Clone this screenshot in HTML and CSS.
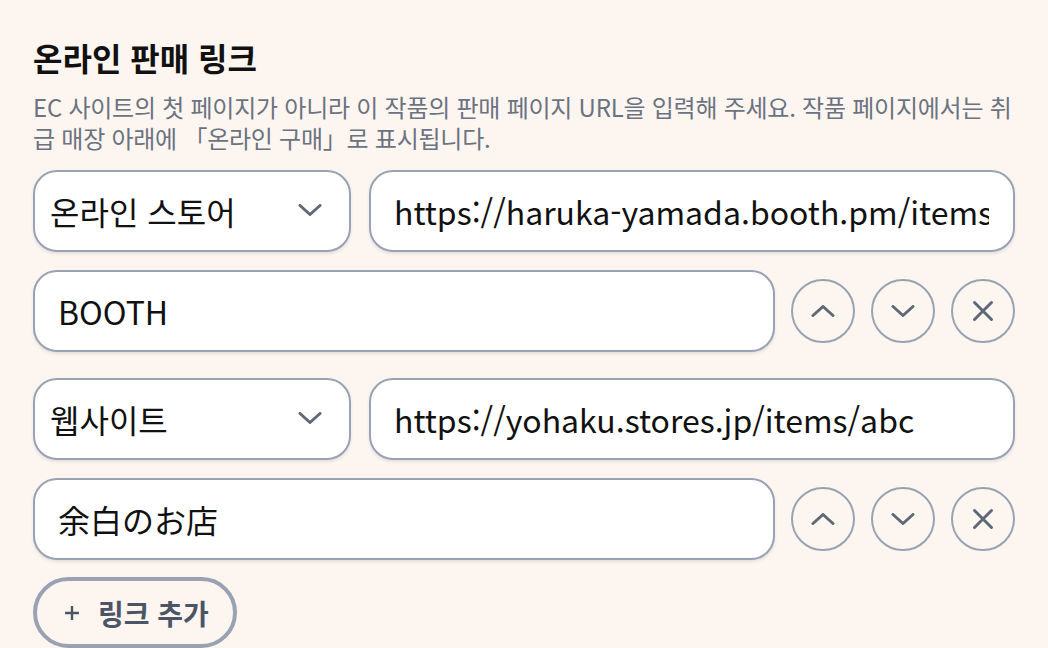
FILE: index.html
```html
<!DOCTYPE html>
<html lang="ko">
<head>
<meta charset="utf-8">
<title>온라인 판매 링크</title>
<link rel="stylesheet" href="styles.css">
</head>
<body>
<section class="panel">
  <h2 class="title">온라인 판매 링크</h2>
  <p class="desc">EC 사이트의 첫 페이지가 아니라 이 작품의 판매 페이지 URL을 입력해 주세요. 작품 페이지에서는 취급 매장 아래에 「온라인 구매」로 표시됩니다.</p>

  <div class="links">
    <div class="link-group">
      <div class="row row-top">
        <div class="select-wrap">
          <select class="field select">
            <option selected>온라인 스토어</option>
            <option>웹사이트</option>
          </select>
          <svg class="select-caret" width="24" height="12" viewBox="0 0 24 12" aria-hidden="true"><path d="M2 1.5 L12 10.5 L22 1.5" fill="none" stroke="#5f6878" stroke-width="3" stroke-linecap="round" stroke-linejoin="round"/></svg>
        </div>
        <input class="field url" type="text" value="https://haruka-yamada.booth.pm/items/4821937">
      </div>
      <div class="row row-bottom">
        <input class="field name" type="text" value="BOOTH">
        <button class="circle" aria-label="위로"><svg width="24" height="12" viewBox="0 0 24 12"><path d="M2 10.5 L12 1.5 L22 10.5" fill="none" stroke="#5f6878" stroke-width="3" stroke-linecap="round" stroke-linejoin="round"/></svg></button>
        <button class="circle" aria-label="아래로"><svg width="24" height="12" viewBox="0 0 24 12"><path d="M2 1.5 L12 10.5 L22 1.5" fill="none" stroke="#5f6878" stroke-width="3" stroke-linecap="round" stroke-linejoin="round"/></svg></button>
        <button class="circle" aria-label="삭제"><svg width="22" height="22" viewBox="0 0 22 22"><path d="M2.5 2.5 L19.5 19.5 M19.5 2.5 L2.5 19.5" fill="none" stroke="#5f6878" stroke-width="3" stroke-linecap="round"/></svg></button>
      </div>
    </div>

    <div class="link-group">
      <div class="row row-top">
        <div class="select-wrap">
          <select class="field select">
            <option>온라인 스토어</option>
            <option selected>웹사이트</option>
          </select>
          <svg class="select-caret" width="24" height="12" viewBox="0 0 24 12" aria-hidden="true"><path d="M2 1.5 L12 10.5 L22 1.5" fill="none" stroke="#5f6878" stroke-width="3" stroke-linecap="round" stroke-linejoin="round"/></svg>
        </div>
        <input class="field url" type="text" value="https://yohaku.stores.jp/items/abc">
      </div>
      <div class="row row-bottom">
        <input class="field name ja" lang="ja" type="text" value="余白のお店">
        <button class="circle" aria-label="위로"><svg width="24" height="12" viewBox="0 0 24 12"><path d="M2 10.5 L12 1.5 L22 10.5" fill="none" stroke="#5f6878" stroke-width="3" stroke-linecap="round" stroke-linejoin="round"/></svg></button>
        <button class="circle" aria-label="아래로"><svg width="24" height="12" viewBox="0 0 24 12"><path d="M2 1.5 L12 10.5 L22 1.5" fill="none" stroke="#5f6878" stroke-width="3" stroke-linecap="round" stroke-linejoin="round"/></svg></button>
        <button class="circle" aria-label="삭제"><svg width="22" height="22" viewBox="0 0 22 22"><path d="M2.5 2.5 L19.5 19.5 M19.5 2.5 L2.5 19.5" fill="none" stroke="#5f6878" stroke-width="3" stroke-linecap="round"/></svg></button>
      </div>
    </div>
  </div>

  <button class="add-btn"><svg width="14" height="14" viewBox="0 0 14 14" aria-hidden="true"><path d="M7 0 V14 M0 7 H14" fill="none" stroke="#4b5565" stroke-width="2.4"/></svg><span>링크 추가</span></button>
</section>
</body>
</html>
```
FILE: styles.css
```css
html, body {
  margin: 0;
  padding: 0;
  background: #fdf6f0;
}

body {
  font-family: "Noto Sans CJK KR", "Noto Sans CJK JP", sans-serif;
  color: #111111;
  overflow: hidden;
}

.panel {
  padding: 34px 33px 0 33px;
}

.title {
  margin: 0;
  font-size: 32px;
  font-weight: 700;
  line-height: 46px;
  color: #111111;
}

.desc {
  margin: 11px 0 0 0;
  font-size: 24px;
  letter-spacing: -0.25px;
  line-height: 31px;
  color: #6b7280;
}

.links {
  margin-top: 17px;
  display: flex;
  flex-direction: column;
  gap: 26px;
}

.link-group {
  display: flex;
  flex-direction: column;
  gap: 18px;
}

.row {
  display: flex;
  align-items: center;
}

.row-top {
  gap: 18px;
}

.row-bottom {
  gap: 16px;
}

.field {
  box-sizing: border-box;
  height: 82px;
  border: 2px solid #98a2b3;
  border-radius: 24px;
  background: #ffffff;
  box-shadow: 0 2px 3px rgba(30, 40, 60, 0.10);
  font-family: inherit;
  font-size: 32px;
  color: #111111;
  outline: none;
  margin: 0;
}

.select-wrap {
  position: relative;
  width: 318px;
  flex: none;
}

.select {
  width: 100%;
  appearance: none;
  -webkit-appearance: none;
  padding: 0 60px 0 15px;
  cursor: pointer;
}

.select-caret {
  position: absolute;
  right: 29px;
  top: 34px;
  pointer-events: none;
}

.url {
  flex: 1;
  min-width: 0;
  padding: 0 24px 0 23px;
}

.name {
  flex: 1;
  min-width: 0;
  padding: 0 23px;
}

.name.ja {
  font-family: "Noto Sans CJK JP", "Noto Sans CJK KR", sans-serif;
}

.circle {
  box-sizing: border-box;
  flex: none;
  width: 64px;
  height: 64px;
  border-radius: 50%;
  border: 2px solid #98a2b3;
  background: transparent;
  display: flex;
  align-items: center;
  justify-content: center;
  padding: 0;
  cursor: pointer;
}

.add-btn {
  box-sizing: border-box;
  margin-top: 17px;
  height: 71px;
  display: inline-flex;
  align-items: center;
  gap: 19px;
  padding: 0 24px 0 28px;
  border: 4px solid #98a2b3;
  border-radius: 36px;
  background: transparent;
  font-family: inherit;
  font-size: 28px;
  font-weight: 700;
  color: #4b5565;
  cursor: pointer;
}

.add-btn span {
  line-height: 1;
}
```
